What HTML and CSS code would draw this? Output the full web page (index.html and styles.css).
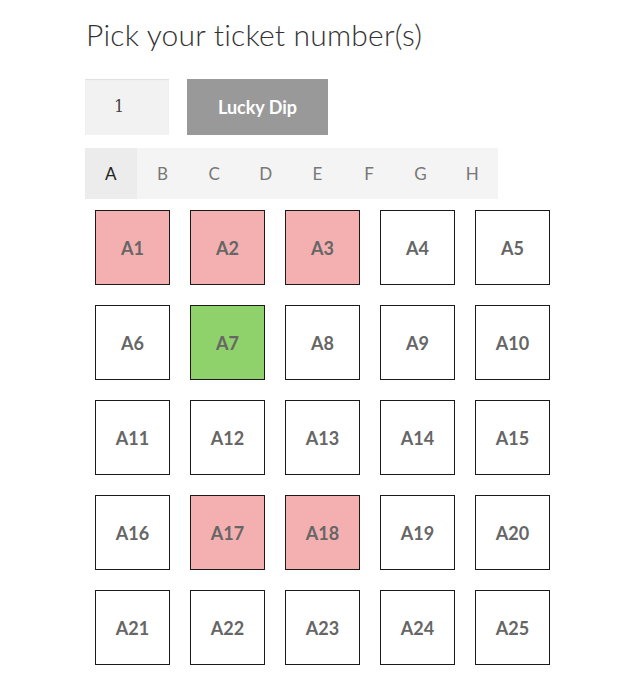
FILE: index.html
```html
<!DOCTYPE html>
<html>
<head>
<meta charset="utf-8">
<link rel="stylesheet" href="styles.css">
</head>
<body>
<div class="page">
  <h2 class="title">Pick your ticket number(s)</h2>
  <div class="controls">
    <div class="qty">1</div>
    <button class="lucky">Lucky Dip</button>
  </div>
  <div class="tabs">
    <span class="tab active">A</span>
    <span class="tab">B</span>
    <span class="tab">C</span>
    <span class="tab">D</span>
    <span class="tab">E</span>
    <span class="tab">F</span>
    <span class="tab">G</span>
    <span class="tab">H</span>
  </div>
  <div class="grid">
    <div class="cell taken">A1</div>
    <div class="cell taken">A2</div>
    <div class="cell taken">A3</div>
    <div class="cell">A4</div>
    <div class="cell">A5</div>
    <div class="cell">A6</div>
    <div class="cell picked">A7</div>
    <div class="cell">A8</div>
    <div class="cell">A9</div>
    <div class="cell">A10</div>
    <div class="cell">A11</div>
    <div class="cell">A12</div>
    <div class="cell">A13</div>
    <div class="cell">A14</div>
    <div class="cell">A15</div>
    <div class="cell">A16</div>
    <div class="cell taken">A17</div>
    <div class="cell taken">A18</div>
    <div class="cell">A19</div>
    <div class="cell">A20</div>
    <div class="cell">A21</div>
    <div class="cell">A22</div>
    <div class="cell">A23</div>
    <div class="cell">A24</div>
    <div class="cell">A25</div>
  </div>
</div>
</body>
</html>
```
FILE: styles.css
```css
html, body {
  margin: 0;
  padding: 0;
  background: #ffffff;
}
.page {
  padding: 12px 0 0 85px;
  font-family: "Lato", "Open Sans", sans-serif;
  color: #6d6d6d;
}
.title {
  margin: 0 0 0 1px;
  font-size: 30px;
  letter-spacing: 0.2px;
  font-weight: 300;
  color: #333333;
  line-height: 44px;
}
.controls {
  display: flex;
  gap: 18px;
  margin-top: 23px;
}
.qty {
  width: 84px;
  height: 56px;
  box-sizing: border-box;
  background: #f2f2f2;
  box-shadow: inset 0 1px 1px rgba(0,0,0,0.08);
  font-family: "DejaVu Serif", serif;
  font-size: 16px;
  color: #444;
  padding-left: 29px;
  line-height: 56px;
}
.lucky {
  width: 141px;
  height: 56px;
  border: 0;
  background: #999999;
  color: #ffffff;
  font-family: "Lato", "Open Sans", sans-serif;
  font-weight: 700;
  font-size: 18px;
  padding: 0;
}
.tabs {
  display: flex;
  width: 413px;
  height: 51px;
  margin-top: 13px;
  background: #f4f4f4;
}
.tab {
  flex: 1;
  display: flex;
  align-items: center;
  justify-content: center;
  font-size: 17px;
  color: #777777;
}
.tab.active {
  background: #ececec;
  color: #222222;
}
.grid {
  display: grid;
  grid-template-columns: repeat(5, 75px);
  gap: 20px;
  padding: 11px 0 0 10px;
}
.cell {
  width: 75px;
  height: 75px;
  box-sizing: border-box;
  border: 1px solid #1a1a1a;
  display: flex;
  align-items: center;
  justify-content: center;
  font-weight: 700;
  font-size: 18px;
  color: #666666;
}
.cell.taken {
  background: #f4b0b0;
}
.cell.picked {
  background: #8fd16a;
}
```
